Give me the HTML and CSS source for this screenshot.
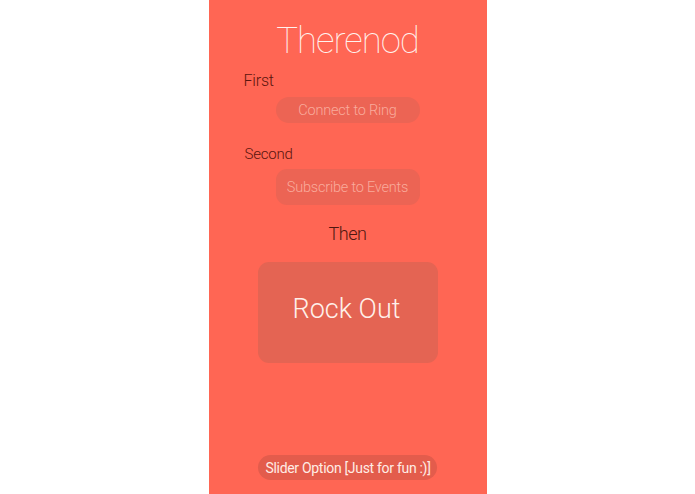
FILE: index.html
```html
<!DOCTYPE html>
<html lang="en">
<head>
<meta charset="utf-8">
<title>Therenod</title>
<link rel="stylesheet" href="styles.css">
</head>
<body>
  <main class="screen">
    <h1 class="title">Therenod</h1>

    <p class="step step-first">First</p>
    <button class="action action-pill">Connect to Ring</button>

    <p class="step step-second">Second</p>
    <button class="action action-rounded">Subscribe to Events</button>

    <p class="then">Then</p>
    <button class="rock">Rock Out</button>

    <button class="slider-option">Slider Option [Just for fun :)]</button>
  </main>
</body>
</html>
```

FILE: styles.css
```css
html, body {
  margin: 0;
  padding: 0;
  background: #ffffff;
}

body {
  font-family: Roboto, "Liberation Sans", sans-serif;
}

.screen {
  width: 278px;
  height: 494px;
  margin: 0 auto;
  background: #ff6654;
  display: flex;
  flex-direction: column;
  align-items: center;
  box-sizing: border-box;
  padding-bottom: 14px;
}

.title {
  margin: 19px 0 0;
  font-size: 36.5px;
  line-height: 44px;
  font-weight: 100;
  color: #fff3ef;
  letter-spacing: -1px;
}

.step {
  align-self: flex-start;
  margin: 0;
  line-height: 20px;
  font-weight: 300;
  color: #5a150e;
}

.step-first {
  margin-top: 8px;
  margin-left: 35px;
  font-size: 16px;
  letter-spacing: -0.2px;
}

.step-second {
  margin-top: 21px;
  margin-left: 36px;
  font-size: 15px;
  letter-spacing: -0.2px;
}

.action {
  width: 144px;
  border: 0;
  padding: 0;
  margin: 0;
  background: #ec6454;
  color: #f9ab9c;
  font-family: inherit;
  font-size: 14.5px;
  font-weight: 300;
}

.action-pill {
  margin-top: 6px;
  height: 26px;
  border-radius: 13px;
  letter-spacing: -0.2px;
}

.action-rounded {
  margin-top: 5px;
  height: 36px;
  border-radius: 11px;
  letter-spacing: -0.2px;
}

.then {
  margin: 18px 0 0;
  font-size: 18px;
  line-height: 22px;
  font-weight: 300;
  color: #4f1710;
  letter-spacing: -0.4px;
}

.rock {
  margin-top: 17px;
  width: 180px;
  height: 101px;
  border: 0;
  border-radius: 11px;
  background: #e46453;
  color: #fff0ea;
  font-family: inherit;
  font-size: 27px;
  font-weight: 300;
  padding: 0 2px 8px 0;
}

.slider-option {
  margin-top: auto;
  height: 25px;
  border: 0;
  border-radius: 12.5px;
  padding: 0 6px 0 7px;
  background: #e35c4c;
  color: #ffece5;
  font-family: inherit;
  font-size: 14px;
  font-weight: 400;
  letter-spacing: -0.3px;
}
```
